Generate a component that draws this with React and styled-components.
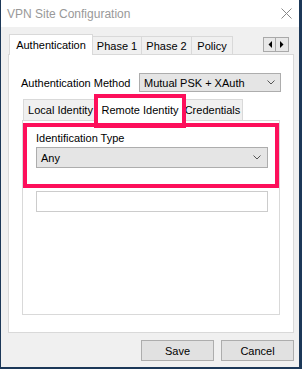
import styled, { createGlobalStyle } from 'styled-components';

const GlobalStyle = createGlobalStyle`
  html, body {
    margin: 0;
    padding: 0;
    background: #1c3858;
  }
  * {
    box-sizing: border-box;
  }
`;

const Window = styled.div`
  width: 298px;
  height: 367px;
  margin-left: 1px;
  background: #f0f0f0;
  display: flex;
  flex-direction: column;
  font-family: 'Liberation Sans', Arial, sans-serif;
  font-size: 11px;
  color: #000;
`;

const TitleBar = styled.div`
  height: 27px;
  background: #fff;
  display: flex;
  align-items: center;
  justify-content: space-between;
  padding: 0 7px 0 6px;
  font-size: 12px;
  color: #999;
`;

const Body = styled.div`
  flex: 1;
  padding: 7px 5px 0 7px;
  display: flex;
  flex-direction: column;
`;

const TabStrip = styled.div`
  display: flex;
  align-items: flex-end;
  height: ${(p) => p.$h}px;
  padding-left: ${(p) => p.$indent}px;
  margin-bottom: -1px;
  position: relative;
  z-index: 1;
`;

const Tab = styled.div`
  position: relative;
  width: ${(p) => p.$w}px;
  height: ${(p) => (p.$active ? p.$h : p.$h - 3)}px;
  margin-bottom: ${(p) => (p.$active ? 0 : 1)}px;
  margin-right: -1px;
  background: ${(p) => (p.$active ? '#fff' : '#f0f0f0')};
  border: 1px solid #d9d9d9;
  border-bottom: none;
  display: flex;
  align-items: center;
  justify-content: center;
  white-space: nowrap;
  z-index: ${(p) => (p.$active ? 2 : 1)};
`;

const Highlight = styled.div`
  position: absolute;
  left: -4px;
  right: -4px;
  top: -4px;
  bottom: -7px;
  border: 4px solid #fd0f5b;
  pointer-events: none;
  z-index: 3;
`;

const Scroller = styled.div`
  margin-left: auto;
  margin-right: 5px;
  align-self: flex-start;
  margin-top: 3px;
  display: flex;
`;

const ScrollButton = styled.div`
  width: 13px;
  height: 15px;
  background: #e8e8e8;
  border: 1px solid #a9a9a9;
  display: flex;
  align-items: center;
  justify-content: center;
  & + & {
    border-left: none;
  }
`;

const Panel = styled.div`
  background: #fff;
  border: 1px solid #d9d9d9;
  height: ${(p) => p.$h}px;
  display: flex;
  flex-direction: column;
`;

const MethodRow = styled.div`
  display: flex;
  align-items: center;
  justify-content: space-between;
  padding: 0 12px;
  margin-top: 18px;
`;

const Combo = styled.div`
  width: ${(p) => p.$w || 'auto'};
  height: ${(p) => p.$h}px;
  background: #e5e5e5;
  border: 1px solid #adadad;
  display: flex;
  align-items: center;
  justify-content: space-between;
  padding: 0 ${(p) => p.$arrowGap}px 0 4px;
`;

const InnerTabs = styled.div`
  margin: 5px 13px 0 13px;
  display: flex;
  flex-direction: column;
`;

const Group = styled.div`
  margin-top: 2px;
  border: 4px solid #fd0f5b;
  padding: 4px 7px 16px 9px;
  display: flex;
  flex-direction: column;
  gap: 2px;
`;

const Label = styled.div`
  line-height: 14px;
`;

const TextBox = styled.div`
  height: 21px;
  margin: 3px 11px 0 13px;
  background: #fff;
  border: 1px solid #cccccc;
`;

const ButtonRow = styled.div`
  display: flex;
  justify-content: flex-end;
  gap: 7px;
  margin-top: 7px;
`;

const Button = styled.div`
  width: 73px;
  height: 21px;
  background: #e1e1e1;
  border: 1px solid #adadad;
  display: flex;
  align-items: center;
  justify-content: center;
`;

const Chevron = () => (
  <svg width="8" height="5" viewBox="0 0 8 5">
    <path d="M0.5 0.5 L4 4 L7.5 0.5" fill="none" stroke="#555" strokeWidth="1" />
  </svg>
);

const CloseIcon = () => (
  <svg width="11" height="11" viewBox="0 0 11 11">
    <path d="M0.5 0.5 L10.5 10.5 M10.5 0.5 L0.5 10.5" stroke="#888" strokeWidth="1" />
  </svg>
);

const Arrow = ({ dir }) => (
  <svg width="4" height="7" viewBox="0 0 4 7">
    {dir === 'left' ? (
      <path d="M4 0 L0.5 3.5 L4 7 Z" fill="#000" />
    ) : (
      <path d="M0 0 L3.5 3.5 L0 7 Z" fill="#000" />
    )}
  </svg>
);

const outerTabs = [
  { label: 'Authentication', w: 84, active: true },
  { label: 'Phase 1', w: 50 },
  { label: 'Phase 2', w: 51 },
  { label: 'Policy', w: 42 },
];

const innerTabs = [
  { label: 'Local Identity', w: 75 },
  { label: 'Remote Identity', w: 86, active: true, marked: true },
  { label: 'Credentials', w: 61 },
];

const App = () => {
  return (
    <>
      <GlobalStyle />
      <Window>
        <TitleBar>
          <span>VPN Site Configuration</span>
          <CloseIcon />
        </TitleBar>
        <Body>
          <TabStrip $h={21} $indent={1}>
            {outerTabs.map((t) => (
              <Tab key={t.label} $w={t.w} $h={21} $active={t.active}>
                {t.label}
              </Tab>
            ))}
            <Scroller>
              <ScrollButton>
                <Arrow dir="left" />
              </ScrollButton>
              <ScrollButton>
                <Arrow dir="right" />
              </ScrollButton>
            </Scroller>
          </TabStrip>
          <Panel $h={279}>
            <MethodRow>
              <span>Authentication Method</span>
              <Combo $w="142px" $h={19} $arrowGap={5}>
                <span>Mutual PSK + XAuth</span>
                <Chevron />
              </Combo>
            </MethodRow>
            <InnerTabs>
              <TabStrip $h={24} $indent={1}>
                {innerTabs.map((t) => (
                  <Tab key={t.label} $w={t.w} $h={24} $active={t.active}>
                    {t.label}
                    {t.marked && <Highlight />}
                  </Tab>
                ))}
              </TabStrip>
              <Panel $h={195}>
                <Group>
                  <Label>Identification Type</Label>
                  <Combo $h={21} $arrowGap={6}>
                    <span>Any</span>
                    <Chevron />
                  </Combo>
                </Group>
                <TextBox />
              </Panel>
            </InnerTabs>
          </Panel>
          <ButtonRow>
            <Button>Save</Button>
            <Button>Cancel</Button>
          </ButtonRow>
        </Body>
      </Window>
    </>
  );
};

export default App;
